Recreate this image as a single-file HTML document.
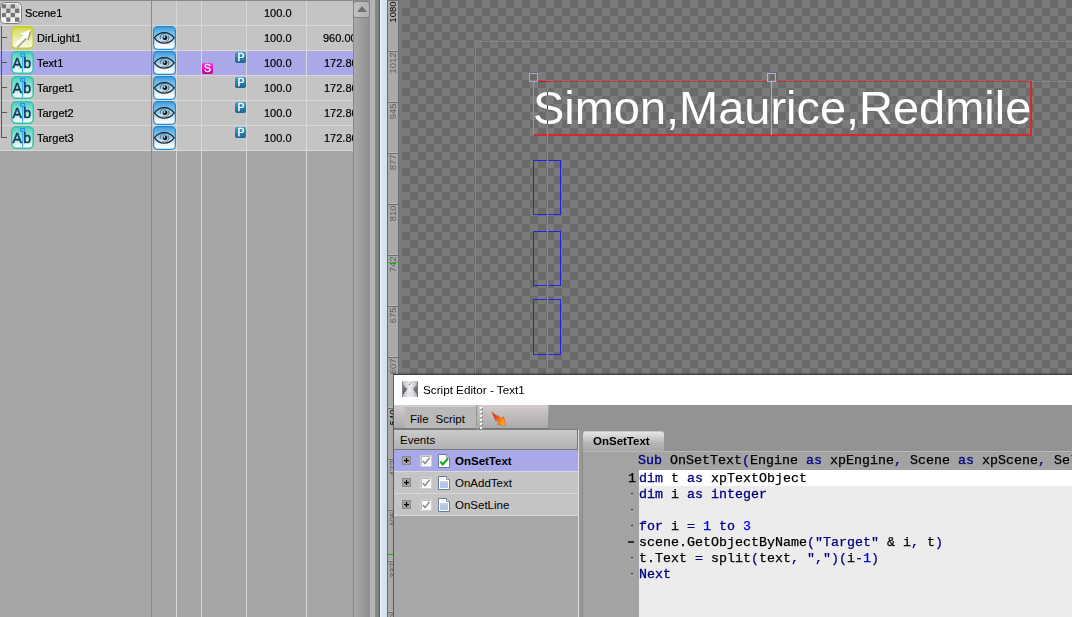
<!DOCTYPE html>
<html><head><meta charset="utf-8">
<style>
*{margin:0;padding:0;box-sizing:border-box}
html,body{width:1072px;height:617px;overflow:hidden;background:#a5a5a5;font-family:"Liberation Sans",sans-serif}
.a{position:absolute}
svg{position:absolute;overflow:visible}
.row{position:absolute;left:0;width:353px;height:25px;background:#c4c4c4;border-bottom:1px solid #d8d8d8}
.row.sel{background:#a9a8e8}
.vl{position:absolute;top:1px;width:1px;height:616px;background:#d8d8d8}
.lbl{position:absolute;font-size:11px;line-height:13px;white-space:nowrap;color:#000;-webkit-text-stroke:0.2px #000}
.mono{font-family:"Liberation Mono",monospace;font-size:13.333px;white-space:pre;position:absolute;line-height:16px;color:#000;-webkit-text-stroke:0.25px #000}
.kw{color:#000080;-webkit-text-stroke:0.3px #000080}
.op{color:#000080;-webkit-text-stroke:0.25px #000080}
.nb{color:#0000ff;-webkit-text-stroke:0.25px #0000ff}
.st{color:#000080;-webkit-text-stroke:0.25px #000080}
.ui{position:absolute;font-size:12px;line-height:14px;white-space:nowrap;color:#000}
</style></head><body>
<svg width="0" height="0" style="position:absolute">
<defs>
 <linearGradient id="eyeg" x1="0" y1="0" x2="0" y2="1"><stop offset="0" stop-color="#3e9ddc"/><stop offset="0.5" stop-color="#9fd2f2"/><stop offset="0.8" stop-color="#eef8fd"/><stop offset="1" stop-color="#ffffff"/></linearGradient>
 <linearGradient id="abg" x1="0" y1="0" x2="0" y2="1"><stop offset="0" stop-color="#4ccdb9"/><stop offset="0.55" stop-color="#aee8dc"/><stop offset="1" stop-color="#ffffff"/></linearGradient>
 <linearGradient id="ltg" x1="0" y1="0" x2="0" y2="1"><stop offset="0" stop-color="#d4d84a"/><stop offset="0.6" stop-color="#ecedb8"/><stop offset="1" stop-color="#fbfbec"/></linearGradient>
 <linearGradient id="sg" x1="0" y1="0" x2="0" y2="1"><stop offset="0" stop-color="#ff30e0"/><stop offset="1" stop-color="#c0008c"/></linearGradient>
 <linearGradient id="pg" x1="0" y1="0" x2="0" y2="1"><stop offset="0" stop-color="#3c9fcc"/><stop offset="1" stop-color="#1a6690"/></linearGradient>


</defs></svg>

<div class="a" style="left:0;top:0;width:353px;height:617px;background:#a5a5a5;overflow:hidden">
<div class="a" style="left:0;top:0;width:353px;height:1px;background:#8a8a8a"></div>
<div class="row" style="top:1px"></div>
<div class="row" style="top:26px"></div>
<div class="row sel" style="top:51px"></div>
<div class="row" style="top:76px"></div>
<div class="row" style="top:101px"></div>
<div class="row" style="top:126px"></div>
<div class="vl" style="left:151px;background:#8a8a8a"></div>
<div class="vl" style="left:176px;background:#d8d8d8"></div>
<div class="vl" style="left:201px;background:#d8d8d8"></div>
<div class="vl" style="left:246px;background:#d8d8d8"></div>
<div class="vl" style="left:306px;background:#d8d8d8"></div>
<div class="a" style="left:1px;top:26px;width:1px;height:112px;background:#555"></div>
<div class="a" style="left:1px;top:37px;width:6px;height:1px;background:#555"></div>
<div class="a" style="left:1px;top:62px;width:6px;height:1px;background:#555"></div>
<div class="a" style="left:1px;top:87px;width:6px;height:1px;background:#555"></div>
<div class="a" style="left:1px;top:112px;width:6px;height:1px;background:#555"></div>
<div class="a" style="left:1px;top:137px;width:6px;height:1px;background:#555"></div>
<svg style="left:0;top:2px" width="22" height="22"><rect x="0.5" y="0.5" width="21" height="21" rx="4" fill="#f4f4f4" stroke="#7e7e7e" stroke-width="1"/><rect x="1.8" y="2.2" width="4.4" height="4.4" fill="#747474"/><rect x="6.2" y="2.2" width="4.4" height="4.4" fill="#d0d0d0"/><rect x="10.6" y="2.2" width="4.4" height="4.4" fill="#747474"/><rect x="15.0" y="2.2" width="4.4" height="4.4" fill="#d0d0d0"/><rect x="1.8" y="6.6" width="4.4" height="4.4" fill="#dadada"/><rect x="6.2" y="6.6" width="4.4" height="4.4" fill="#747474"/><rect x="10.6" y="6.6" width="4.4" height="4.4" fill="#dadada"/><rect x="15.0" y="6.6" width="4.4" height="4.4" fill="#747474"/><rect x="1.8" y="11.0" width="4.4" height="4.4" fill="#747474"/><rect x="6.2" y="11.0" width="4.4" height="4.4" fill="#e8e8e8"/><rect x="10.6" y="11.0" width="4.4" height="4.4" fill="#747474"/><rect x="15.0" y="11.0" width="4.4" height="4.4" fill="#e8e8e8"/><rect x="1.8" y="15.4" width="4.4" height="4.4" fill="#f6f6f6"/><rect x="6.2" y="15.4" width="4.4" height="4.4" fill="#747474"/><rect x="10.6" y="15.4" width="4.4" height="4.4" fill="#f6f6f6"/><rect x="15.0" y="15.4" width="4.4" height="4.4" fill="#747474"/></svg>
<svg style="left:11px;top:26px" width="23" height="23">
<rect x="0.75" y="0.75" width="21.5" height="21.5" rx="4.5" fill="url(#ltg)" stroke="#c6cc20" stroke-width="1.3"/>
<path d="M19.2 3.7 L9 7.5 L12.3 9.6 L3.6 18.6 L5.8 20.8 L14.6 11.9 L16.5 13.4Z" fill="#4a4a20" opacity="0.45" transform="translate(1.2,1.2)"/>
<path d="M19.2 3.7 L9 7.5 L12.3 9.6 L3.6 18.6 L5.8 20.8 L14.6 11.9 L16.5 13.4Z" fill="#ffffff"/>
</svg>
<div class="lbl" style="left:25px;top:7px">Scene1</div>
<div class="lbl" style="left:264px;top:7px">100.0</div>
<div class="lbl" style="left:37px;top:32px">DirLight1</div>
<svg style="left:153px;top:26px" width="23" height="24"><g>
  <rect x="0.6" y="0.6" width="21.8" height="22.8" rx="4.2" fill="url(#eyeg)" stroke="#1c8ad8" stroke-width="1.2"/>
  <path d="M1.4 11.9 C5 7.2 8.2 6.6 11.3 6.6 C14.4 6.6 17.6 7.2 21.2 11.9 C17.6 16.6 14.4 17.2 11.3 17.2 C8.2 17.2 5 16.6 1.4 11.9Z" fill="none" stroke="#1e1e1e" stroke-width="1.15"/>
  <circle cx="11.6" cy="11.8" r="4.3" fill="none" stroke="#4a4a4a" stroke-width="0.8" stroke-dasharray="9 3"/>
  <circle cx="12" cy="11.8" r="2.4" fill="#1c1c1c"/>
  <circle cx="11.3" cy="11" r="0.9" fill="#c8e4f4"/>
 </g></svg>
<div class="lbl" style="left:264px;top:32px">100.0</div>
<div class="lbl" style="left:323px;top:32px">960.00</div>
<div class="lbl" style="left:37px;top:57px">Text1</div>
<svg style="left:153px;top:51px" width="23" height="24"><g>
  <rect x="0.6" y="0.6" width="21.8" height="22.8" rx="4.2" fill="url(#eyeg)" stroke="#1c8ad8" stroke-width="1.2"/>
  <path d="M1.4 11.9 C5 7.2 8.2 6.6 11.3 6.6 C14.4 6.6 17.6 7.2 21.2 11.9 C17.6 16.6 14.4 17.2 11.3 17.2 C8.2 17.2 5 16.6 1.4 11.9Z" fill="none" stroke="#1e1e1e" stroke-width="1.15"/>
  <circle cx="11.6" cy="11.8" r="4.3" fill="none" stroke="#4a4a4a" stroke-width="0.8" stroke-dasharray="9 3"/>
  <circle cx="12" cy="11.8" r="2.4" fill="#1c1c1c"/>
  <circle cx="11.3" cy="11" r="0.9" fill="#c8e4f4"/>
 </g></svg>
<svg style="left:11px;top:51px" width="23" height="23"><g>
  <rect x="0.75" y="0.75" width="21.5" height="21.5" rx="4.5" fill="url(#abg)" stroke="#2fc5aa" stroke-width="1.5"/>
  <text x="1.6" y="17" font-family="Liberation Sans" font-size="14" fill="#0b3a5e" stroke="#0b3a5e" stroke-width="0.5">A</text>
  <text x="12.2" y="17" font-family="Liberation Sans" font-size="14" fill="#0b3a5e" stroke="#0b3a5e" stroke-width="0.5">b</text>
  <rect x="9.6" y="2.6" width="4" height="2.6" fill="none" stroke="#1890f0" stroke-width="1"/>
  <rect x="11.1" y="5.2" width="1" height="16.2" fill="#2aa0ff"/>
 </g></svg>
<svg style="left:235px;top:52px" width="11" height="11"><rect x="0" y="0" width="11" height="11" rx="2" fill="url(#pg)"/><text x="2.4" y="9.3" font-family="Liberation Sans" font-size="10.5" fill="#fff" stroke="#fff" stroke-width="0.35">P</text></svg>
<svg style="left:202px;top:63px" width="11" height="11"><rect x="0" y="0" width="11" height="11" rx="2" fill="url(#sg)"/><text x="2.1" y="9.4" font-family="Liberation Sans" font-size="10.5" fill="#fff" stroke="#fff" stroke-width="0.35">S</text></svg>
<div class="lbl" style="left:264px;top:57px">100.0</div>
<div class="lbl" style="left:324px;top:57px">172.80</div>
<div class="lbl" style="left:37px;top:82px">Target1</div>
<svg style="left:153px;top:76px" width="23" height="24"><g>
  <rect x="0.6" y="0.6" width="21.8" height="22.8" rx="4.2" fill="url(#eyeg)" stroke="#1c8ad8" stroke-width="1.2"/>
  <path d="M1.4 11.9 C5 7.2 8.2 6.6 11.3 6.6 C14.4 6.6 17.6 7.2 21.2 11.9 C17.6 16.6 14.4 17.2 11.3 17.2 C8.2 17.2 5 16.6 1.4 11.9Z" fill="none" stroke="#1e1e1e" stroke-width="1.15"/>
  <circle cx="11.6" cy="11.8" r="4.3" fill="none" stroke="#4a4a4a" stroke-width="0.8" stroke-dasharray="9 3"/>
  <circle cx="12" cy="11.8" r="2.4" fill="#1c1c1c"/>
  <circle cx="11.3" cy="11" r="0.9" fill="#c8e4f4"/>
 </g></svg>
<svg style="left:11px;top:76px" width="23" height="23"><g>
  <rect x="0.75" y="0.75" width="21.5" height="21.5" rx="4.5" fill="url(#abg)" stroke="#2fc5aa" stroke-width="1.5"/>
  <text x="1.6" y="17" font-family="Liberation Sans" font-size="14" fill="#0b3a5e" stroke="#0b3a5e" stroke-width="0.5">A</text>
  <text x="12.2" y="17" font-family="Liberation Sans" font-size="14" fill="#0b3a5e" stroke="#0b3a5e" stroke-width="0.5">b</text>
  <rect x="9.6" y="2.6" width="4" height="2.6" fill="none" stroke="#1890f0" stroke-width="1"/>
  <rect x="11.1" y="5.2" width="1" height="16.2" fill="#2aa0ff"/>
 </g></svg>
<svg style="left:235px;top:77px" width="11" height="11"><rect x="0" y="0" width="11" height="11" rx="2" fill="url(#pg)"/><text x="2.4" y="9.3" font-family="Liberation Sans" font-size="10.5" fill="#fff" stroke="#fff" stroke-width="0.35">P</text></svg>
<div class="lbl" style="left:264px;top:82px">100.0</div>
<div class="lbl" style="left:324px;top:82px">172.80</div>
<div class="lbl" style="left:37px;top:107px">Target2</div>
<svg style="left:153px;top:101px" width="23" height="24"><g>
  <rect x="0.6" y="0.6" width="21.8" height="22.8" rx="4.2" fill="url(#eyeg)" stroke="#1c8ad8" stroke-width="1.2"/>
  <path d="M1.4 11.9 C5 7.2 8.2 6.6 11.3 6.6 C14.4 6.6 17.6 7.2 21.2 11.9 C17.6 16.6 14.4 17.2 11.3 17.2 C8.2 17.2 5 16.6 1.4 11.9Z" fill="none" stroke="#1e1e1e" stroke-width="1.15"/>
  <circle cx="11.6" cy="11.8" r="4.3" fill="none" stroke="#4a4a4a" stroke-width="0.8" stroke-dasharray="9 3"/>
  <circle cx="12" cy="11.8" r="2.4" fill="#1c1c1c"/>
  <circle cx="11.3" cy="11" r="0.9" fill="#c8e4f4"/>
 </g></svg>
<svg style="left:11px;top:101px" width="23" height="23"><g>
  <rect x="0.75" y="0.75" width="21.5" height="21.5" rx="4.5" fill="url(#abg)" stroke="#2fc5aa" stroke-width="1.5"/>
  <text x="1.6" y="17" font-family="Liberation Sans" font-size="14" fill="#0b3a5e" stroke="#0b3a5e" stroke-width="0.5">A</text>
  <text x="12.2" y="17" font-family="Liberation Sans" font-size="14" fill="#0b3a5e" stroke="#0b3a5e" stroke-width="0.5">b</text>
  <rect x="9.6" y="2.6" width="4" height="2.6" fill="none" stroke="#1890f0" stroke-width="1"/>
  <rect x="11.1" y="5.2" width="1" height="16.2" fill="#2aa0ff"/>
 </g></svg>
<svg style="left:235px;top:102px" width="11" height="11"><rect x="0" y="0" width="11" height="11" rx="2" fill="url(#pg)"/><text x="2.4" y="9.3" font-family="Liberation Sans" font-size="10.5" fill="#fff" stroke="#fff" stroke-width="0.35">P</text></svg>
<div class="lbl" style="left:264px;top:107px">100.0</div>
<div class="lbl" style="left:324px;top:107px">172.80</div>
<div class="lbl" style="left:37px;top:132px">Target3</div>
<svg style="left:153px;top:126px" width="23" height="24"><g>
  <rect x="0.6" y="0.6" width="21.8" height="22.8" rx="4.2" fill="url(#eyeg)" stroke="#1c8ad8" stroke-width="1.2"/>
  <path d="M1.4 11.9 C5 7.2 8.2 6.6 11.3 6.6 C14.4 6.6 17.6 7.2 21.2 11.9 C17.6 16.6 14.4 17.2 11.3 17.2 C8.2 17.2 5 16.6 1.4 11.9Z" fill="none" stroke="#1e1e1e" stroke-width="1.15"/>
  <circle cx="11.6" cy="11.8" r="4.3" fill="none" stroke="#4a4a4a" stroke-width="0.8" stroke-dasharray="9 3"/>
  <circle cx="12" cy="11.8" r="2.4" fill="#1c1c1c"/>
  <circle cx="11.3" cy="11" r="0.9" fill="#c8e4f4"/>
 </g></svg>
<svg style="left:11px;top:126px" width="23" height="23"><g>
  <rect x="0.75" y="0.75" width="21.5" height="21.5" rx="4.5" fill="url(#abg)" stroke="#2fc5aa" stroke-width="1.5"/>
  <text x="1.6" y="17" font-family="Liberation Sans" font-size="14" fill="#0b3a5e" stroke="#0b3a5e" stroke-width="0.5">A</text>
  <text x="12.2" y="17" font-family="Liberation Sans" font-size="14" fill="#0b3a5e" stroke="#0b3a5e" stroke-width="0.5">b</text>
  <rect x="9.6" y="2.6" width="4" height="2.6" fill="none" stroke="#1890f0" stroke-width="1"/>
  <rect x="11.1" y="5.2" width="1" height="16.2" fill="#2aa0ff"/>
 </g></svg>
<svg style="left:235px;top:127px" width="11" height="11"><rect x="0" y="0" width="11" height="11" rx="2" fill="url(#pg)"/><text x="2.4" y="9.3" font-family="Liberation Sans" font-size="10.5" fill="#fff" stroke="#fff" stroke-width="0.35">P</text></svg>
<div class="lbl" style="left:264px;top:132px">100.0</div>
<div class="lbl" style="left:324px;top:132px">172.80</div>
</div>
<div class="a" style="left:353px;top:0;width:17px;height:617px;background:linear-gradient(90deg,#a9a9a9,#8f8f8f);border-left:1px solid #888"></div>
<div class="a" style="left:353px;top:0;width:17px;height:1px;background:#8a8a8a"></div>
<div class="a" style="left:353px;top:1px;width:17px;height:17px;border:1px solid #848484;border-radius:3px;background:linear-gradient(90deg,#c2c2c2,#b0b0b0)"></div>
<div class="a" style="left:356.5px;top:6px;width:0;height:0;border-left:5px solid transparent;border-right:5px solid transparent;border-bottom:6px solid #707070"></div>
<div class="a" style="left:370px;top:0;width:5px;height:617px;background:#b4b4b4"></div>
<div class="a" style="left:375px;top:0;width:4px;height:617px;background:linear-gradient(90deg,#8c8c8c,#7a7a7a)"></div>
<div class="a" style="left:379px;top:0;width:1px;height:617px;background:#5e5e5e"></div>
<div class="a" style="left:380px;top:0;width:7px;height:617px;background:linear-gradient(90deg,#f2f6fb,#d8e3f0 30%,#d3dfed)"></div>
<div class="a" style="left:387px;top:0;width:1px;height:617px;background:#6a6a6a"></div>
<div class="a" style="left:398px;top:0;width:1px;height:617px;background:#6e6e6e"></div>
<div class="a" style="left:399px;top:0;width:3px;height:374px;background:#7b7b7b"></div>

<svg style="left:388px;top:0" width="10" height="617"><rect x="0" y="0" width="10" height="617" fill="#a9a9a9"/><rect x="0" y="0" width="10" height="1" fill="#6e6e6e"/><rect x="0" y="-1" width="10" height="1" fill="#b8b8b8"/><text transform="translate(8,1.5) rotate(-90)" text-anchor="end" font-family="Liberation Sans" font-size="9.5" fill="#000">1080</text><rect x="0" y="51" width="10" height="1" fill="#6e6e6e"/><rect x="0" y="50" width="10" height="1" fill="#b8b8b8"/><text transform="translate(8,52.5) rotate(-90)" text-anchor="end" font-family="Liberation Sans" font-size="9.5" fill="#5e5e5e">1012</text><rect x="0" y="102" width="10" height="1" fill="#6e6e6e"/><rect x="0" y="101" width="10" height="1" fill="#b8b8b8"/><text transform="translate(8,103.5) rotate(-90)" text-anchor="end" font-family="Liberation Sans" font-size="9.5" fill="#5e5e5e">945</text><rect x="0" y="153" width="10" height="1" fill="#6e6e6e"/><rect x="0" y="152" width="10" height="1" fill="#b8b8b8"/><text transform="translate(8,154.5) rotate(-90)" text-anchor="end" font-family="Liberation Sans" font-size="9.5" fill="#5e5e5e">877</text><rect x="0" y="204" width="10" height="1" fill="#6e6e6e"/><rect x="0" y="203" width="10" height="1" fill="#b8b8b8"/><text transform="translate(8,205.5) rotate(-90)" text-anchor="end" font-family="Liberation Sans" font-size="9.5" fill="#5e5e5e">810</text><rect x="0" y="255" width="10" height="1" fill="#6e6e6e"/><rect x="0" y="254" width="10" height="1" fill="#b8b8b8"/><text transform="translate(8,256.5) rotate(-90)" text-anchor="end" font-family="Liberation Sans" font-size="9.5" fill="#5e5e5e">742</text><rect x="0" y="306" width="10" height="1" fill="#6e6e6e"/><rect x="0" y="305" width="10" height="1" fill="#b8b8b8"/><text transform="translate(8,307.5) rotate(-90)" text-anchor="end" font-family="Liberation Sans" font-size="9.5" fill="#5e5e5e">675</text><rect x="0" y="357" width="10" height="1" fill="#6e6e6e"/><rect x="0" y="356" width="10" height="1" fill="#b8b8b8"/><text transform="translate(8,358.5) rotate(-90)" text-anchor="end" font-family="Liberation Sans" font-size="9.5" fill="#5e5e5e">607</text><rect x="0" y="408" width="10" height="1" fill="#6e6e6e"/><rect x="0" y="407" width="10" height="1" fill="#b8b8b8"/><text transform="translate(8,409.5) rotate(-90)" text-anchor="end" font-family="Liberation Sans" font-size="9.5" fill="#000">540</text><rect x="0" y="459" width="10" height="1" fill="#6e6e6e"/><rect x="0" y="458" width="10" height="1" fill="#b8b8b8"/><text transform="translate(8,460.5) rotate(-90)" text-anchor="end" font-family="Liberation Sans" font-size="9.5" fill="#5e5e5e">472</text><rect x="0" y="510" width="10" height="1" fill="#6e6e6e"/><rect x="0" y="509" width="10" height="1" fill="#b8b8b8"/><text transform="translate(8,511.5) rotate(-90)" text-anchor="end" font-family="Liberation Sans" font-size="9.5" fill="#5e5e5e">405</text><rect x="0" y="561" width="10" height="1" fill="#6e6e6e"/><rect x="0" y="560" width="10" height="1" fill="#b8b8b8"/><text transform="translate(8,562.5) rotate(-90)" text-anchor="end" font-family="Liberation Sans" font-size="9.5" fill="#5e5e5e">337</text><rect x="0" y="612" width="10" height="1" fill="#6e6e6e"/><rect x="0" y="611" width="10" height="1" fill="#b8b8b8"/><text transform="translate(8,613.5) rotate(-90)" text-anchor="end" font-family="Liberation Sans" font-size="9.5" fill="#5e5e5e">270</text><rect x="0" y="262" width="10" height="1" fill="#10d010"/><rect x="0" y="554" width="10" height="1" fill="#10b010"/></svg>
<div class="a" style="left:402px;top:0;width:670px;height:374px;background:conic-gradient(#6b6b6b 25%,#7b7b7b 0 50%,#6b6b6b 0 75%,#7b7b7b 0) 0 0/16px 16px"></div>
<div class="a" style="left:475px;top:41px;width:597px;height:1px;background:#858585"></div>
<div class="a" style="left:475px;top:42px;width:1px;height:332px;background:#858585"></div>
<div class="a" style="left:1031px;top:81px;width:41px;height:1px;background:#858585"></div>
<div class="a" style="left:531px;top:79px;width:2000px;height:60px;overflow:visible">
</div>
<div class="a" style="left:533px;top:81px;width:499px;height:55px;border:1px solid #cc3333;border-bottom:2px solid #d02c2c;border-right:2px solid #d42a2a;border-left-color:#d07890"></div>
<div class="a" style="left:533px;top:81px;width:15px;height:1px;background:#ff0000"></div>
<div class="a" style="left:533px;top:81px;font-size:46.95px;line-height:54px;color:#fff;white-space:nowrap">Simon,Maurice,Redmile</div>
<div class="a" style="left:771px;top:82px;width:1px;height:53px;background:#a8a8d0"></div>
<div class="a" style="left:529px;top:73px;width:9px;height:9px;border:1px solid #a8a8d8"></div>
<div class="a" style="left:767px;top:73px;width:9px;height:9px;border:1px solid #b0b0d8"></div>

<div class="a" style="left:533px;top:160px;width:28px;height:55px;border:1.7px solid #2424e0"></div>
<div class="a" style="left:533px;top:231px;width:28px;height:55px;border:1.7px solid #2424e0"></div>
<div class="a" style="left:533px;top:299px;width:28px;height:56px;border:1.7px solid #2424e0"></div>
<div class="a" style="left:547px;top:82px;width:1px;height:292px;background:#fff;mix-blend-mode:difference;opacity:0.75"></div>
<div class="a" style="left:393px;top:372px;width:679px;height:2px;background:linear-gradient(rgba(0,0,0,0),rgba(0,0,0,0.25))"></div>
<div class="a" style="left:393px;top:374px;width:679px;height:243px;background:#939393;border-left:1px solid #5a5a5a;border-top:1px solid #404040"></div>
<div class="a" style="left:394px;top:375px;width:678px;height:30px;background:#fff"></div>

<svg style="left:402px;top:381px" width="16" height="16">
<defs><linearGradient id="xg" x1="0" y1="0" x2="1" y2="0"><stop offset="0" stop-color="#b8b8c0"/><stop offset="0.5" stop-color="#f0f0f0"/><stop offset="1" stop-color="#b0b0b8"/></linearGradient>
<linearGradient id="xs" x1="0" y1="0" x2="0" y2="1"><stop offset="0" stop-color="#8a8c98"/><stop offset="1" stop-color="#5a5c68"/></linearGradient></defs>
<rect x="0" y="0" width="16" height="16" fill="url(#xg)"/>
<path d="M0 2 L5 8 L0 15Z" fill="url(#xs)"/>
<path d="M16 2 L11 8 L16 15Z" fill="url(#xs)"/>
<rect x="0" y="1" width="1" height="15" fill="#888"/><rect x="15" y="1" width="1" height="15" fill="#777"/>
<path d="M4 15 L8 10 L12 15Z" fill="#dfe6ee"/>
<path d="M1.4 12.7 L4.8 7.4" stroke="#333" stroke-width="1" stroke-dasharray="1 1"/>
<path d="M7 4 L9.6 0.6" stroke="#333" stroke-width="1" stroke-dasharray="1 1"/>
</svg>
<div class="ui" style="left:423px;top:383px;font-size:11.7px">Script Editor - Text1</div>
<div class="a" style="left:394px;top:405px;width:82px;height:24px;background:linear-gradient(#d4cccc,#a8a8a8)"></div>
<div class="a" style="left:405px;top:407px;width:71px;height:21px;background:#b9b9b9"></div>
<div class="a" style="left:394px;top:428px;width:155px;height:1px;background:#7a7a7a"></div>
<div class="a" style="left:476px;top:405px;width:2px;height:24px;background:linear-gradient(90deg,#8a8a8a,#c0c0c0)"></div>
<div class="a" style="left:478px;top:405px;width:71px;height:23px;background:linear-gradient(#d3cccc,#aaaaaa)"></div>
<div class="a" style="left:548px;top:405px;width:1px;height:23px;background:linear-gradient(#b0a8a8,#888)"></div>
<div class="ui" style="left:410px;top:412px;font-size:11.5px">File<span style="margin-left:7px">Script</span></div>

<svg style="left:480px;top:407px" width="4" height="22"><rect x="1" y="1" width="2" height="2" fill="#8a8a8a"/><rect x="0" y="0" width="2" height="2" fill="#fff"/><rect x="1" y="5" width="2" height="2" fill="#8a8a8a"/><rect x="0" y="4" width="2" height="2" fill="#fff"/><rect x="1" y="9" width="2" height="2" fill="#8a8a8a"/><rect x="0" y="8" width="2" height="2" fill="#fff"/><rect x="1" y="13" width="2" height="2" fill="#8a8a8a"/><rect x="0" y="12" width="2" height="2" fill="#fff"/><rect x="1" y="17" width="2" height="2" fill="#8a8a8a"/><rect x="0" y="16" width="2" height="2" fill="#fff"/><rect x="1" y="21" width="2" height="2" fill="#8a8a8a"/><rect x="0" y="20" width="2" height="2" fill="#fff"/></svg>
<svg style="left:491px;top:411px" width="16" height="16">
<defs><linearGradient id="arg" x1="0" y1="0" x2="1" y2="1"><stop offset="0" stop-color="#c01818"/><stop offset="0.5" stop-color="#f86818"/><stop offset="1" stop-color="#ffd020"/></linearGradient></defs>
<path d="M1 1 L6.5 5.8 L6.2 4 L10 7.4 L12.6 5.8 L14.6 14.6 L6 13.2 L8.2 11.4 L5 8.6 L4.8 10.2Z" fill="url(#arg)" stroke="#e84010" stroke-width="0.5"/>
</svg>
<div class="a" style="left:394px;top:429px;width:184px;height:1px;background:#7c7c7c"></div>
<div class="a" style="left:394px;top:430px;width:184px;height:187px;background:#a8a8a8"></div>
<div class="a" style="left:394px;top:430px;width:183px;height:19px;background:linear-gradient(#cacaca,#b2b2b2)"></div>
<div class="a" style="left:394px;top:449px;width:184px;height:1px;background:#777"></div>
<div class="a" style="left:577px;top:430px;width:1px;height:19px;background:#777"></div>
<div class="a" style="left:578px;top:430px;width:1px;height:187px;background:#dcdcdc"></div>
<div class="ui" style="left:400px;top:433px;font-size:11.5px">Events</div>

<div class="a" style="left:394px;top:450px;width:184px;height:21px;background:#a9a8e8"></div>
<div class="a" style="left:394px;top:471px;width:184px;height:1px;background:#d8d8d8"></div>
<svg style="left:402px;top:456px" width="9" height="9"><rect x="0.5" y="0.5" width="8" height="8" fill="#a2a2a2" stroke="#8a8a8a"/><rect x="2" y="4" width="5" height="1.2" fill="#000"/><rect x="3.9" y="2" width="1.2" height="5" fill="#000"/></svg>
<svg style="left:420px;top:455px" width="12" height="12"><rect x="0.5" y="0.5" width="11" height="11" rx="1" fill="#fbfbfb" stroke="#d0d0d0"/><path d="M1.5 1.5 H10.5" stroke="#b8b8b8"/><path d="M1.5 1.5 V10.5" stroke="#b8b8b8"/><path d="M2.8 6 L5 8.6 L9.6 2.8" fill="none" stroke="#8c8c8c" stroke-width="1.5"/></svg>
<svg style="left:438px;top:454px" width="12" height="14"><path d="M0.5 0.5 H8.5 L11.5 3.5 V13.5 H0.5Z" fill="#ffffff" stroke="#6a7a9a"/><path d="M8.5 0.5 V3.5 H11.5" fill="#dde" stroke="#6a7a9a" stroke-width="0.8"/><path d="M2.2 7.6 L4.8 10.4 L10 4.6" fill="none" stroke="#18a818" stroke-width="2.2"/></svg>
<div class="ui" style="left:455px;top:454px;font-size:11.5px;font-weight:bold">OnSetText</div>
<div class="a" style="left:394px;top:472px;width:184px;height:21px;background:#c4c4c4"></div>
<div class="a" style="left:394px;top:493px;width:184px;height:1px;background:#d8d8d8"></div>
<svg style="left:402px;top:478px" width="9" height="9"><rect x="0.5" y="0.5" width="8" height="8" fill="#a2a2a2" stroke="#8a8a8a"/><rect x="2" y="4" width="5" height="1.2" fill="#000"/><rect x="3.9" y="2" width="1.2" height="5" fill="#000"/></svg>
<svg style="left:420px;top:477px" width="12" height="12"><rect x="0.5" y="0.5" width="11" height="11" rx="1" fill="#fbfbfb" stroke="#d0d0d0"/><path d="M1.5 1.5 H10.5" stroke="#b8b8b8"/><path d="M1.5 1.5 V10.5" stroke="#b8b8b8"/><path d="M2.8 6 L5 8.6 L9.6 2.8" fill="none" stroke="#8c8c8c" stroke-width="1.5"/></svg>
<svg style="left:438px;top:476px" width="12" height="14"><path d="M0.5 0.5 H8.5 L11.5 3.5 V13.5 H0.5Z" fill="#ffffff" stroke="#6a7a9a"/><path d="M8.5 0.5 V3.5 H11.5" fill="#dde" stroke="#6a7a9a" stroke-width="0.8"/><rect x="2" y="5.5" width="8" height="1" fill="#8aa0cc"/><rect x="2" y="7" width="8" height="5" fill="#b4c4e4"/></svg>
<div class="ui" style="left:455px;top:476px;font-size:11.5px;font-weight:normal">OnAddText</div>
<div class="a" style="left:394px;top:494px;width:184px;height:21px;background:#c4c4c4"></div>
<div class="a" style="left:394px;top:515px;width:184px;height:1px;background:#d8d8d8"></div>
<svg style="left:402px;top:500px" width="9" height="9"><rect x="0.5" y="0.5" width="8" height="8" fill="#a2a2a2" stroke="#8a8a8a"/><rect x="2" y="4" width="5" height="1.2" fill="#000"/><rect x="3.9" y="2" width="1.2" height="5" fill="#000"/></svg>
<svg style="left:420px;top:499px" width="12" height="12"><rect x="0.5" y="0.5" width="11" height="11" rx="1" fill="#fbfbfb" stroke="#d0d0d0"/><path d="M1.5 1.5 H10.5" stroke="#b8b8b8"/><path d="M1.5 1.5 V10.5" stroke="#b8b8b8"/><path d="M2.8 6 L5 8.6 L9.6 2.8" fill="none" stroke="#8c8c8c" stroke-width="1.5"/></svg>
<svg style="left:438px;top:498px" width="12" height="14"><path d="M0.5 0.5 H8.5 L11.5 3.5 V13.5 H0.5Z" fill="#ffffff" stroke="#6a7a9a"/><path d="M8.5 0.5 V3.5 H11.5" fill="#dde" stroke="#6a7a9a" stroke-width="0.8"/><rect x="2" y="5.5" width="8" height="1" fill="#8aa0cc"/><rect x="2" y="7" width="8" height="5" fill="#b4c4e4"/></svg>
<div class="ui" style="left:455px;top:498px;font-size:11.5px;font-weight:normal">OnSetLine</div>
<div class="a" style="left:579px;top:430px;width:3px;height:187px;background:#999"></div>
<div class="a" style="left:582px;top:430px;width:490px;height:21px;background:#939393"></div>
<div class="a" style="left:583px;top:431px;width:81px;height:20px;border-radius:3px 3px 0 0;background:linear-gradient(#e6e6e6,#b4b4b4 60%,#a8a8a8);border-top:1px solid #c8c8c8"></div>
<div class="ui" style="left:593px;top:434px;font-size:11.5px;font-weight:bold">OnSetText</div>
<div class="a" style="left:582px;top:451px;width:490px;height:166px;background:#a3a3a3"></div>
<div class="a" style="left:582px;top:451px;width:490px;height:1px;background:#b8b8b8"></div>
<div class="a" style="left:639px;top:470px;width:433px;height:16px;background:#ffffff"></div>
<div class="a" style="left:639px;top:486px;width:433px;height:131px;background:#ececec"></div>
<div class="a" style="left:582px;top:451px;width:1px;height:166px;background:#8a8a8a"></div>

<div class="mono" style="left:638px;top:453px"><span class="kw">Sub</span> OnSetText<span class="op">(</span>Engine <span class="kw">as</span> xpEngine<span class="op">,</span> Scene <span class="kw">as</span> xpScene<span class="op">,</span> Selection <span class="kw">as</span> xpBaseObject<span class="op">)</span></div>
<div class="mono" style="left:639px;top:471px"><span class="kw">dim</span> t <span class="kw">as</span> xpTextObject</div>
<div class="mono" style="left:639px;top:487px"><span class="kw">dim</span> i <span class="kw">as</span> <span class="kw">integer</span></div>
<div class="mono" style="left:639px;top:503px"></div>
<div class="mono" style="left:639px;top:519px"><span class="kw">for</span> i <span class="op">=</span> <span class="nb">1</span> <span class="kw">to</span> <span class="nb">3</span></div>
<div class="mono" style="left:639px;top:535px">scene.GetObjectByName<span class="op">(</span><span class="st">"Target"</span> &amp; i<span class="op">,</span> t<span class="op">)</span></div>
<div class="mono" style="left:639px;top:551px">t.Text <span class="op">=</span> split<span class="op">(</span>text<span class="op">,</span> <span class="st">","</span><span class="op">)(</span>i<span class="op">-</span><span class="nb">1</span><span class="op">)</span></div>
<div class="mono" style="left:639px;top:567px"><span class="kw">Next</span></div>
<div class="mono" style="left:628px;top:471px;color:#000">1</div>
<div class="a" style="left:631px;top:493px;width:2px;height:1px;background:#303030"></div>
<div class="a" style="left:631px;top:509px;width:2px;height:1px;background:#303030"></div>
<div class="a" style="left:631px;top:525px;width:2px;height:1px;background:#303030"></div>
<div class="a" style="left:628px;top:541px;width:6px;height:2px;background:#303030"></div>
<div class="a" style="left:631px;top:557px;width:2px;height:1px;background:#303030"></div>
<div class="a" style="left:631px;top:573px;width:2px;height:1px;background:#303030"></div>
</body></html>
